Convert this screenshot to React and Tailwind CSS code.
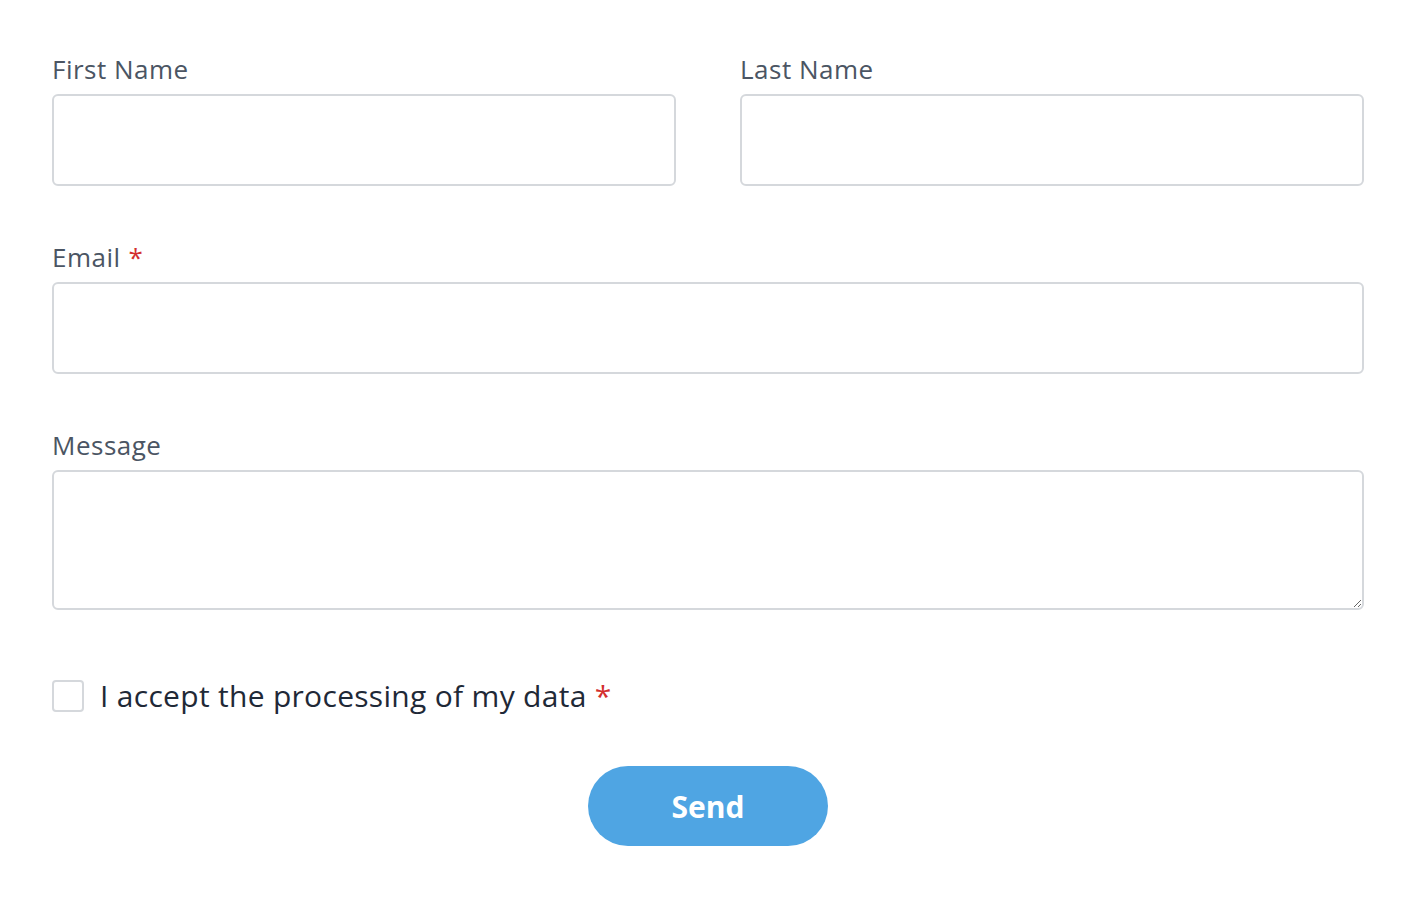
import React from 'react';

const Field = ({ label, required, children }) => (
  <div className="flex flex-col">
    <label className="text-[26px] leading-[34px] tracking-[0.5px] text-[#4b5563] mb-[8px]">
      {label}
      {required && <span className="text-[#d32f2f] ml-2">*</span>}
    </label>
    {children}
  </div>
);

const inputCls =
  'w-full h-[92px] rounded-[6px] border-2 border-[#d5d8dc] bg-white px-4 text-[26px] outline-none';

export default function App() {
  return (
    <div className="min-h-screen bg-white" style={{ fontFamily: '"Open Sans", "Noto Sans", sans-serif' }}>
      <form className="w-[1312px] ml-[52px] pt-[52px] flex flex-col">
        <div className="grid grid-cols-2 gap-x-16">
          <Field label="First Name">
            <input type="text" className={inputCls} />
          </Field>
          <Field label="Last Name">
            <input type="text" className={inputCls} />
          </Field>
        </div>

        <div className="mt-[54px]">
          <Field label="Email" required>
            <input type="email" className={inputCls} />
          </Field>
        </div>

        <div className="mt-[54px]">
          <Field label="Message">
            <textarea className="block w-full h-[140px] rounded-[6px] border-2 border-[#d5d8dc] bg-white px-4 py-3 text-[26px] outline-none" />
          </Field>
        </div>

        <label className="mt-[68px] flex items-center gap-4">
          <input type="checkbox" className="appearance-none w-8 h-8 rounded-[4px] border-2 border-[#d5d8dc] bg-white" />
          <span className="text-[30px] leading-[36px] tracking-[0.3px] text-[#1f2937]">
            I accept the processing of my data
            <span className="text-[#d32f2f] ml-2">*</span>
          </span>
        </label>

        <div className="mt-[52px] flex justify-center">
          <button type="button" className="w-[240px] h-[80px] rounded-full bg-[#4fa5e3] text-white text-[30px] font-bold">
            Send
          </button>
        </div>
      </form>
    </div>
  );
}
